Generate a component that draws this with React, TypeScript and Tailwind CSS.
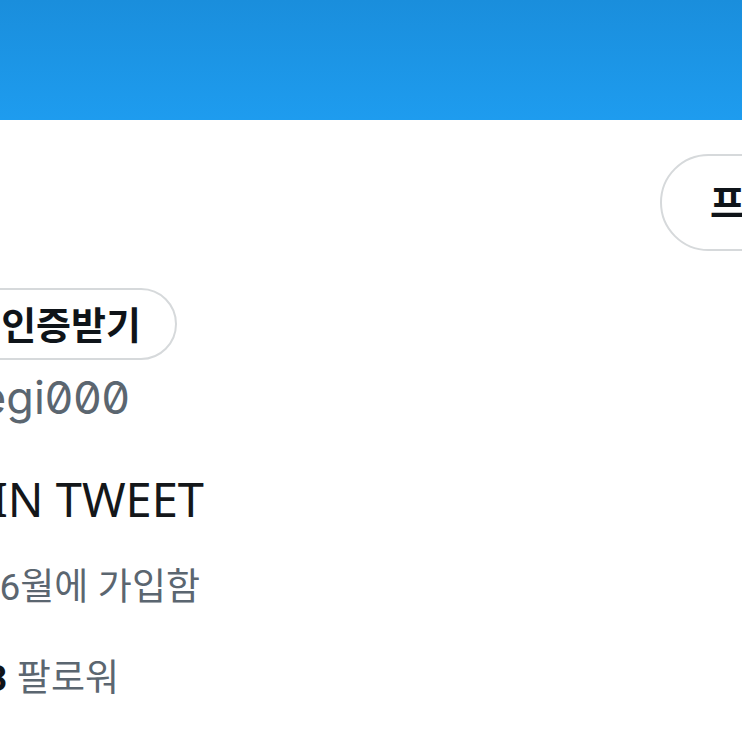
export default function App() {
  return (
    <div className="w-[742px] h-[742px] overflow-hidden bg-white" style={{ fontFamily: '"Noto Sans", "Noto Sans CJK KR", sans-serif' }}>
      <div className="h-[120px] bg-gradient-to-b from-[#1a8edc] to-[#1e9cef]" />
      <div className="mt-[34px] pl-[660px] flex">
        <div className="h-[97px] rounded-full border-2 border-[#d6d9db] pl-[48px] pr-[40px] flex items-center whitespace-nowrap text-[38px] font-bold text-[#0f1419] shrink-0">
          프로필 수정
        </div>
      </div>
      <div className="mt-[37px] w-[177px] flex justify-end">
        <div className="h-[72px] rounded-full border-2 border-[#d6d9db] pl-[40px] pr-[34px] flex items-center whitespace-nowrap text-[38px] font-bold text-[#0f1419] shrink-0">
          인증받기
        </div>
      </div>
      <div className="mt-[10px] w-[130px] flex justify-end">
        <div className="whitespace-nowrap shrink-0 text-[45px] leading-[56px] text-[#5b6670] [font-feature-settings:'zero'] font-['Inter',sans-serif]">
          @Hanegi000
        </div>
      </div>
      <div className="mt-[43px] w-[204px] flex justify-end">
        <div className="whitespace-nowrap shrink-0 text-[47px] leading-[60px] text-[#14171a]">
          SUMMER IN TWEET
        </div>
      </div>
      <div className="mt-[29px] w-[200px] flex justify-end">
        <div className="whitespace-nowrap shrink-0 text-[37px] leading-[56px] text-[#5b6670]">
          2022년 <span className="font-['Roboto',sans-serif]">6</span>월에 가입함
        </div>
      </div>
      <div className="mt-[33px] w-[119px] flex justify-end">
        <div className="whitespace-nowrap shrink-0 text-[37px] leading-[56px] text-[#5b6670]">
          <span className="font-bold text-[#0f1419] font-['Roboto',sans-serif]">123</span> 팔로워
        </div>
      </div>
    </div>
  );
}
